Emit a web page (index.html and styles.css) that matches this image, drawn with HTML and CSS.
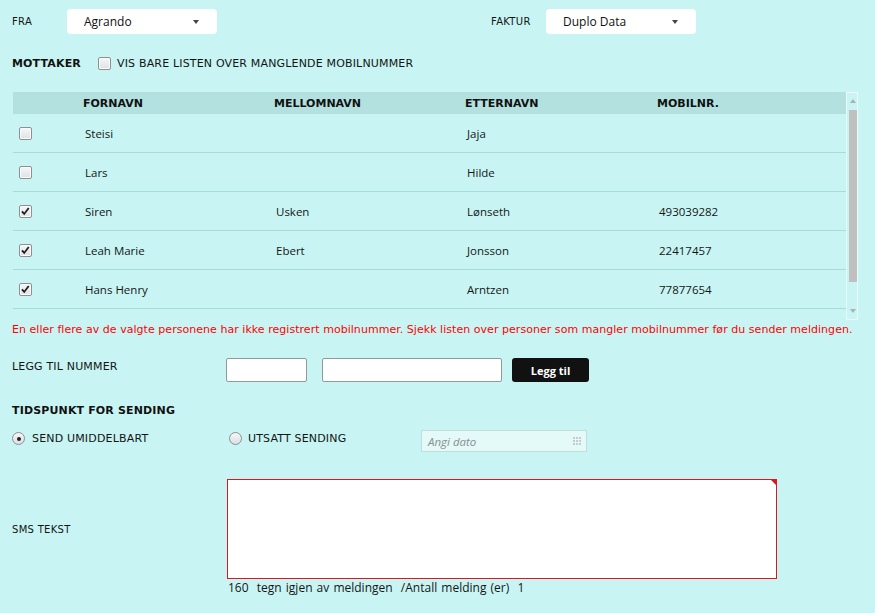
FILE: index.html
```html
<!DOCTYPE html>
<html lang="no">
<head>
<meta charset="utf-8">
<title>SMS</title>
<link rel="stylesheet" href="styles.css">
</head>
<body>
<div class="page">
  <div class="top">
    <div class="field from">
      <span class="lbl small">FRA</span>
      <div class="select"><span>Agrando</span><span class="caret"></span></div>
    </div>
    <div class="field">
      <span class="lbl small">FAKTUR</span>
      <div class="select"><span>Duplo Data</span><span class="caret"></span></div>
    </div>
  </div>

  <div class="mottaker">
    <span class="heading">MOTTAKER</span>
    <span class="cb"></span>
    <span class="caps">VIS BARE LISTEN OVER MANGLENDE MOBILNUMMER</span>
  </div>

  <div class="list-wrap">
    <div class="list">
      <div class="row head">
        <span></span><span>FORNAVN</span><span>MELLOMNAVN</span><span>ETTERNAVN</span><span>MOBILNR.</span>
      </div>
      <div class="row">
        <span class="c"><span class="cb"></span></span><span>Steisi</span><span></span><span>Jaja</span><span></span>
      </div>
      <div class="row">
        <span class="c"><span class="cb"></span></span><span>Lars</span><span></span><span>Hilde</span><span></span>
      </div>
      <div class="row">
        <span class="c"><span class="cb on"><svg viewBox="0 0 13 13" width="11" height="11"><path d="M2.3 6.3 L5 9.4 L10.3 2.4" fill="none" stroke="#1e1e1e" stroke-width="2.1"/></svg></span></span><span>Siren</span><span>Usken</span><span>Lønseth</span><span>493039282</span>
      </div>
      <div class="row">
        <span class="c"><span class="cb on"><svg viewBox="0 0 13 13" width="11" height="11"><path d="M2.3 6.3 L5 9.4 L10.3 2.4" fill="none" stroke="#1e1e1e" stroke-width="2.1"/></svg></span></span><span>Leah Marie</span><span>Ebert</span><span>Jonsson</span><span>22417457</span>
      </div>
      <div class="row">
        <span class="c"><span class="cb on"><svg viewBox="0 0 13 13" width="11" height="11"><path d="M2.3 6.3 L5 9.4 L10.3 2.4" fill="none" stroke="#1e1e1e" stroke-width="2.1"/></svg></span></span><span>Hans Henry</span><span></span><span>Arntzen</span><span>77877654</span>
      </div>
      <div class="row">
        <span class="c"><span class="cb"></span></span><span></span><span></span><span></span><span></span>
      </div>
    </div>
    <div class="scrollbar">
      <span class="arrow up"></span>
      <span class="thumb"></span>
      <span class="track"></span>
      <span class="arrow down"></span>
    </div>
  </div>

  <p class="error">En eller flere av de valgte personene har ikke registrert mobilnummer. Sjekk listen over personer som mangler mobilnummer før du sender meldingen.</p>

  <div class="add">
    <span class="caps lblcol">LEGG TIL NUMMER</span>
    <span class="input short"></span>
    <span class="input long"></span>
    <span class="btn">Legg til</span>
  </div>

  <div class="heading when">TIDSPUNKT FOR SENDING</div>

  <div class="radios">
    <div class="radio-item first"><span class="radio on"></span><span class="caps">SEND UMIDDELBART</span></div>
    <div class="radio-item second"><span class="radio"></span><span class="caps">UTSATT SENDING</span></div>
    <div class="date">
      <span class="ph">Angi dato</span>
      <svg class="grid-ico" width="8" height="8" viewBox="0 0 8 8"><g fill="#c4cccc"><rect x="0" y="0" width="2" height="2"/><rect x="3" y="0" width="2" height="2"/><rect x="6" y="0" width="2" height="2"/><rect x="0" y="3" width="2" height="2"/><rect x="3" y="3" width="2" height="2"/><rect x="6" y="3" width="2" height="2"/><rect x="0" y="6" width="2" height="2"/><rect x="3" y="6" width="2" height="2"/><rect x="6" y="6" width="2" height="2"/></g></svg>
    </div>
  </div>

  <div class="sms">
    <span class="lbl small lblcol">SMS TEKST</span>
    <div class="textarea"></div>
  </div>
  <div class="counter">160&nbsp; tegn igjen av meldingen&nbsp; /Antall melding (er)&nbsp; 1</div>
</div>
</body>
</html>
```

FILE: styles.css
```css
* { box-sizing: border-box; }

body {
  margin: 0;
  background: #c8f5f3;
  font-family: "DejaVu Sans", Verdana, sans-serif;
  font-size: 11px;
  color: #141414;
}

.page {
  width: 875px;
  height: 613px;
  padding: 9px 0 0 12px;
  overflow: hidden;
}

/* top selects */
.top {
  display: flex;
  height: 25px;
}
.field {
  display: flex;
  align-items: center;
}
.field.from { width: 479px; }
.lbl.small { font-size: 10px; letter-spacing: 0.3px; }
.field .lbl { width: 55px; }

.select {
  width: 150px;
  height: 25px;
  background: #fff;
  border-radius: 4px;
  display: flex;
  align-items: center;
  justify-content: space-between;
  padding: 0 18px 0 17px;
  font-family: "Open Sans", "Noto Sans", sans-serif;
  font-size: 12px;
  color: #111;
}
.caret {
  width: 0;
  height: 0;
  border-left: 3.5px solid transparent;
  border-right: 3.5px solid transparent;
  border-top: 4px solid #444;
}

/* mottaker */
.mottaker {
  display: flex;
  align-items: center;
  height: 22px;
  margin-top: 18px;
}
.heading {
  font-weight: bold;
  font-size: 11px;
  letter-spacing: 0.15px;
  color: #111;
}
.mottaker .heading { width: 86px; }
.mottaker .cb { margin-right: 6px; }
.caps { font-size: 11px; letter-spacing: 0.17px; }

/* checkbox */
.cb {
  display: inline-flex;
  align-items: center;
  justify-content: center;
  width: 13px;
  height: 13px;
  border: 1px solid #8e8f8f;
  border-radius: 2px;
  background: linear-gradient(#f6f7f8, #dde1e6);
  box-shadow: inset 0 0 0 1px #fbfbfb;
}
.cb svg { display: block; }

/* list */
.list-wrap {
  display: flex;
  margin: 18px 0 0 1px;
  height: 230px;
  overflow: hidden;
}
.list { width: 833px; }
.row {
  display: grid;
  grid-template-columns: 68px 191px 191px 192px 1fr;
  align-items: center;
  height: 39px;
  border-bottom: 1px solid #a8dcdb;
  font-family: "Open Sans", "Noto Sans", sans-serif;
  font-size: 11.5px;
  color: #151515;
}
.row > span { padding-left: 4px; }
.row > span.c { padding-left: 6px; display: flex; }
.row.head {
  height: 22px;
  background: #b3e1e0;
  border-bottom: none;
  font-family: "DejaVu Sans", Verdana, sans-serif;
  font-weight: bold;
  font-size: 11px;
  color: #111;
}
.row.head > span { padding-left: 2px; }

.scrollbar {
  width: 12px;
  height: 228px;
  border: 1px solid #eafafa;
  border-top-color: #f2fcfc;
  display: flex;
  flex-direction: column;
  align-items: center;
  padding: 0 0 0 1px;
}
.arrow {
  width: 0;
  height: 0;
  border-left: 3px solid transparent;
  border-right: 3px solid transparent;
}
.arrow.up { border-bottom: 4px solid #a9b3b3; margin: 6px 0 7px; }
.arrow.down { border-top: 4px solid #a9b3b3; margin: 0 0 6px; }
.thumb {
  width: 8px;
  height: 172px;
  background: #c0c0c0;
}
.track { flex: 1; }

/* error */
.error {
  margin: 1px 0 0;
  line-height: 14px;
  color: #f00;
  font-size: 11px;
  letter-spacing: 0.04px;
  white-space: nowrap;
}

/* add number */
.add {
  display: flex;
  align-items: flex-start;
  margin-top: 21px;
  height: 24px;
}
.lblcol { width: 214px; flex: none; }
.add .caps { line-height: 14px; margin-top: 2px; }
.input {
  height: 24px;
  background: #fff;
  border: 1px solid #8f9a9c;
  border-radius: 2px;
}
.input.short { width: 81px; margin-right: 15px; }
.input.long { width: 180px; margin-right: 10px; }
.btn {
  width: 77px;
  height: 24px;
  background: #111;
  color: #fff;
  border-radius: 3px;
  display: flex;
  align-items: center;
  justify-content: center;
  font-family: "Open Sans", "Noto Sans", sans-serif;
  font-weight: bold;
  font-size: 11px;
}

.heading.when {
  margin-top: 22px;
  line-height: 14px;
}

/* radios */
.radios {
  display: flex;
  align-items: flex-start;
  margin-top: 12px;
  height: 22px;
}
.radio-item {
  display: flex;
  align-items: center;
  margin-top: 2px;
  height: 13px;
}
.radio-item.first { width: 217px; gap: 7px; }
.radio-item.second { width: 192px; gap: 6px; }
.radio {
  width: 13px;
  height: 13px;
  border-radius: 50%;
  border: 1px solid #8e8f8f;
  background: linear-gradient(#f6f7f8, #dadfe4);
  display: flex;
  align-items: center;
  justify-content: center;
}
.radio.on::after {
  content: "";
  width: 4px;
  height: 4px;
  border-radius: 50%;
  background: #222;
}
.date {
  width: 166px;
  height: 22px;
  background: #e3faf9;
  border: 1px solid #c3dddc;
  display: flex;
  align-items: center;
  justify-content: space-between;
  padding: 0 5px 0 6px;
}
.ph {
  font-style: italic;
  color: #8a8f8f;
  font-family: "Open Sans", "Noto Sans", sans-serif;
  font-size: 11.5px;
}

/* sms */
.sms {
  display: flex;
  align-items: center;
  margin-top: 27px;
}
.sms .lblcol { width: 215px; }
.textarea {
  position: relative;
  width: 550px;
  height: 100px;
  background: #fff;
  border: 1px solid #e0141c;
}
.textarea::after {
  content: "";
  position: absolute;
  top: 0;
  right: 0;
  border-top: 5px solid #e0141c;
  border-left: 5px solid transparent;
}
.counter {
  margin: 2px 0 0 216px;
  line-height: 14px;
  font-family: "Open Sans", "Noto Sans", sans-serif;
  font-size: 12px;
  word-spacing: 1px;
  color: #151515;
}
```
